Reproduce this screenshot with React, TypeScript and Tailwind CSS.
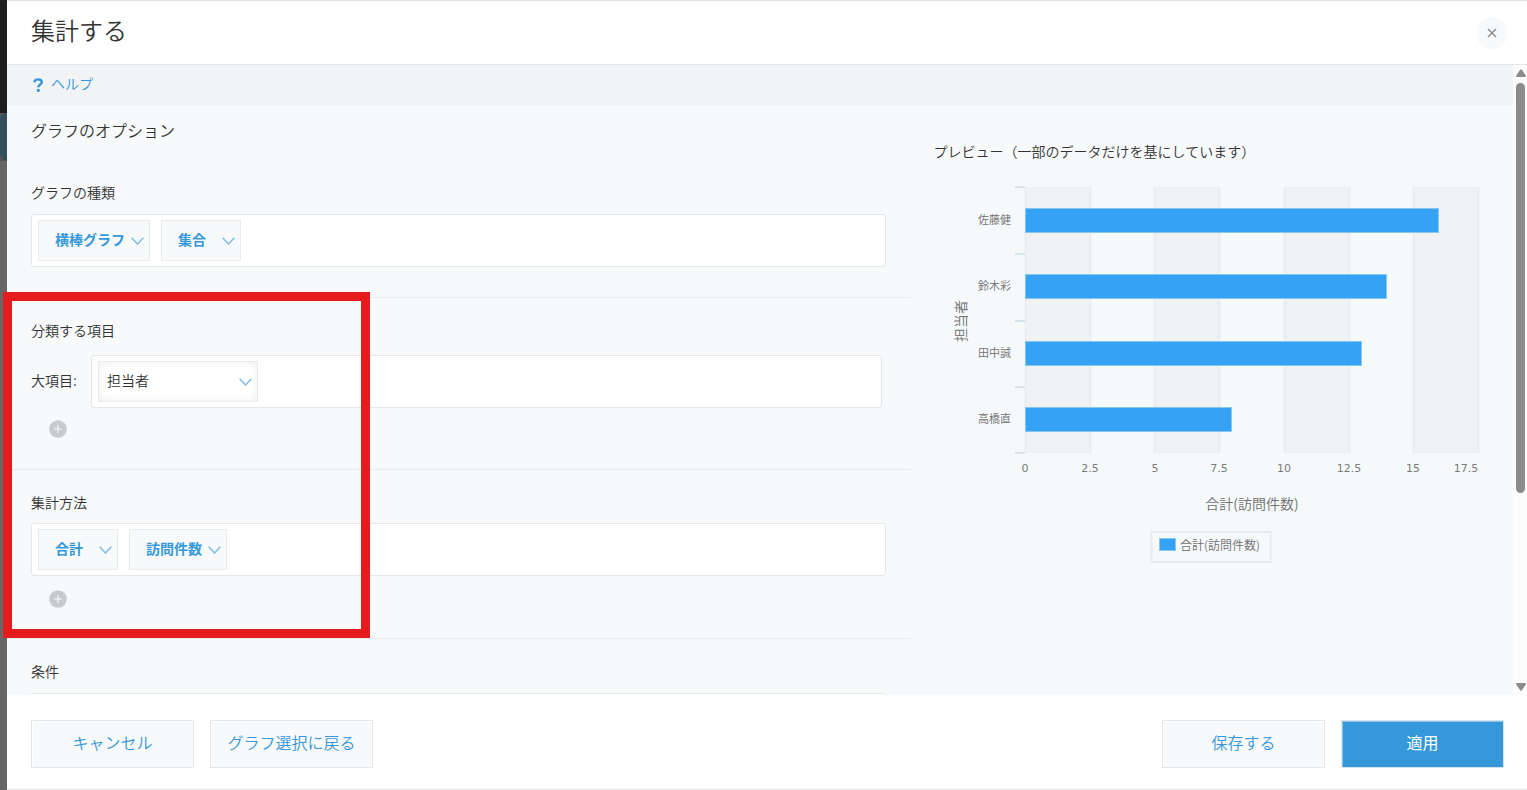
import type { ReactNode } from "react";

const STEP = 65;
const PLOT_LEFT = 91;
const PLOT_TOP = 10;
const PLOT_BOTTOM = 276;
const PLOT_WIDTH = 453;
const AXIS_MAX = 17.5;

const bars = [
  { name: "佐藤健", value: 16 },
  { name: "鈴木彩", value: 14 },
  { name: "田中誠", value: 13 },
  { name: "高橋直", value: 8 },
];

const axisTicks = [
  { label: "0", x: 91 },
  { label: "2.5", x: 156 },
  { label: "5", x: 221 },
  { label: "7.5", x: 285 },
  { label: "10", x: 350 },
  { label: "12.5", x: 415 },
  { label: "15", x: 479 },
  { label: "17.5", x: 532 },
];

function Chevron() {
  return (
    <svg
      className="pointer-events-none absolute top-1/2 right-[6px] h-2 w-[13px] -translate-y-1/2"
      viewBox="0 0 13 8"
      fill="none"
      stroke="#7fbdeb"
      strokeWidth="1.5"
      aria-hidden="true"
    >
      <path d="M0.6 0.8 L6.5 7 L12.4 0.8" />
    </svg>
  );
}

function Chip({ label, options, width }: { label: string; options: string[]; width: string }) {
  return (
    <div className={`relative h-[41px] ${width}`}>
      <select
        aria-label={label}
        className="h-full w-full appearance-none border border-[#e8ebec] bg-[#f7f9fa] pb-[3px] pl-4 text-sm font-bold text-[#3498db] outline-none"
      >
        {options.map((o) => (
          <option key={o}>{o}</option>
        ))}
      </select>
      <Chevron />
    </div>
  );
}

function Box({ children, className = "" }: { children?: ReactNode; className?: string }) {
  return (
    <div
      className={`flex h-[53px] items-center gap-[11px] rounded-[3px] border border-[#e3e7e8] bg-white px-[6px] ${className}`}
    >
      {children}
    </div>
  );
}

function AddButton({ label }: { label: string }) {
  return (
    <button type="button" aria-label={label} className="ml-[18px] block size-[18px]">
      <svg viewBox="0 0 18 18" className="size-full" aria-hidden="true">
        <circle cx="9" cy="9" r="8.8" fill="#c9cacb" />
        <path d="M9 5v8M5 9h8" stroke="#f7f9fa" strokeWidth="1.2" />
      </svg>
    </button>
  );
}

function Chart() {
  return (
    <svg
      width="552"
      height="399"
      viewBox="0 0 552 399"
      className="shrink-0 bg-[#f5f9fa]"
      role="img"
      aria-label="担当者ごとの合計(訪問件数)"
    >
      {[0, 2, 4, 6].map((i) => {
        const x = Math.round(PLOT_LEFT + (i * PLOT_WIDTH) / 7);
        return (
          <g key={i}>
            <rect x={x} y={PLOT_TOP - 1} width={STEP} height={PLOT_BOTTOM - PLOT_TOP} fill="#f0f1f3" />
            <path
              d={`M${x + 0.5} ${PLOT_TOP - 1}V${PLOT_BOTTOM - 1}M${x + STEP + 0.5} ${PLOT_TOP - 1}V${PLOT_BOTTOM - 1}`}
              stroke="#e8ecee"
              strokeWidth="1.5"
            />
          </g>
        );
      })}
      {[9, 76, 143, 209, 275].map((y) => (
        <path key={y} d={`M81 ${y}H91`} stroke="#dae4ec" strokeWidth="2" />
      ))}
      {bars.map((bar, i) => {
        const y = Math.round(30 + i * 66.4);
        return (
          <g key={bar.name}>
            <rect
              x={PLOT_LEFT + 0.5}
              y={y + 0.5}
              width={Math.round((bar.value / AXIS_MAX) * PLOT_WIDTH) - 1}
              height="24"
              fill="#36a2f5"
              stroke="#86c7f5"
            />
            <text x="77" y={y + 16} textAnchor="end" fontSize="11" fill="#707070">
              {bar.name}
            </text>
          </g>
        );
      })}
      <g
        fontSize="11"
        fontWeight="400"
        fill="#7b7b7b"
        fontFamily="'DejaVu Sans', sans-serif"
        textAnchor="middle"
      >
        {axisTicks.map((t) => (
          <text key={t.label} x={t.x} y="294">
            {t.label}
          </text>
        ))}
      </g>
      <text transform="translate(32 143) rotate(-90)" textAnchor="middle" fontSize="14" fill="#707070">
        担当者
      </text>
      <text x="318" y="331" textAnchor="middle" fontSize="14" fill="#707070">
        合計(訪問件数)
      </text>
      <rect x="217.5" y="354" width="119" height="30" fill="none" stroke="#e8ecee" strokeWidth="2" />
      <rect x="225.5" y="360.5" width="16" height="12" fill="#36a2f5" stroke="#86c7f5" />
      <text x="246" y="372" fontSize="12" fill="#707070">
        合計(訪問件数)
      </text>
    </svg>
  );
}

function Scrollbar() {
  return (
    <div className="flex w-[14px] shrink-0 flex-col items-center bg-[#fcfcfc] py-1 pl-px" aria-hidden="true">
      <svg width="10" height="8" viewBox="0 0 10 8" fill="#8b8b8b">
        <path d="M4.2 0.8Q5 -0.2 5.8 0.8L9.8 6.6Q10.2 8 9 8H1Q-0.2 8 0.2 6.6Z" />
      </svg>
      <div className="mt-[6px] w-[9px] flex-[410] rounded-full bg-[#8b8b8b]" />
      <div className="flex-[190]" />
      <svg width="10" height="8" viewBox="0 0 10 8" fill="#8b8b8b">
        <path d="M4.2 7.2Q5 8.2 5.8 7.2L9.8 1.4Q10.2 0 9 0H1Q-0.2 0 0.2 1.4Z" />
      </svg>
    </div>
  );
}

const plainButton =
  "h-12 w-[163px] border border-[#e3e7e8] bg-[#f7f9fa] pb-1 text-base text-[#3498db] shadow-[inset_1px_1px_0_#fff]";

export default function App() {
  return (
    <div
      className="relative flex h-screen overflow-hidden bg-white text-sm leading-5 font-[350] text-[#333] [font-family:'Noto_Sans_CJK_JP',sans-serif]"
      lang="ja"
    >
      <div className="flex w-[7px] shrink-0 flex-col overflow-hidden bg-[#666]" aria-hidden="true">
        <div className="h-[113px] bg-[#1e1e1e]" />
        <div className="h-12 bg-[#555]">
          <div className="h-full w-6 rounded-l-lg bg-[#344e5e]" />
        </div>
      </div>

      <div className="flex min-w-0 flex-1 flex-col border-t border-[#e3e5e6]">
        <header className="flex h-16 shrink-0 items-center justify-between border-b border-[#e3e7e8] pr-[19px] pl-6">
          <h1 className="pb-[6px] text-2xl font-[350]">集計する</h1>
          <button
            type="button"
            aria-label="閉じる"
            className="flex size-8 items-center justify-center rounded-full bg-[#f7f9fa]"
          >
            <svg width="10" height="10" viewBox="0 0 10 10" stroke="#8f8f8f" strokeWidth="1.5" aria-hidden="true">
              <path d="M1 1l8 8M9 1l-8 8" />
            </svg>
          </button>
        </header>

        <div className="flex min-h-0 flex-1">
          <main className="min-w-0 flex-1 overflow-hidden bg-[#f7f9fb]">
            <div className="flex h-10 items-center bg-[#f1f3f5] pl-6">
              <a href="#help" className="flex items-center gap-[6px] pb-1 text-[#3498db]">
                <svg width="14" height="14" viewBox="0 0 14 14" fill="none" className="mt-1" aria-hidden="true">
                  <path
                    d="M3.4 4.4C3.6 2.4 5 1.4 7.1 1.4S10.8 2.5 10.8 4.3C10.8 6.6 7.3 6.5 7.3 9.3"
                    stroke="#3498db"
                    strokeWidth="2.4"
                  />
                  <rect x="5.9" y="11" width="2.8" height="2.8" fill="#3498db" />
                </svg>
                ヘルプ
              </a>
            </div>

            <div className="flex">
              <div className="w-3/5 shrink-0">
                <section className="border-b border-[#e9ecee] pt-[15px] pr-[25px] pb-[30px] pl-6">
                  <h2 className="text-base leading-5 font-[350]">グラフのオプション</h2>
                  <h3 className="mt-[42px] mb-3">グラフの種類</h3>
                  <Box>
                    <Chip label="グラフの種類" options={["横棒グラフ", "縦棒グラフ", "円グラフ"]} width="w-28" />
                    <Chip label="表示形式" options={["集合", "積み上げ"]} width="w-20" />
                  </Box>
                </section>

                <section className="border-b border-[#e9ecee] pt-[22px] pr-[25px] pb-[31px] pl-6">
                  <h3 className="mb-[15px]">分類する項目</h3>
                  <div className="mb-3 flex items-center">
                    <label htmlFor="main-group" className="w-[60px] shrink-0 pb-1">
                      大項目:
                    </label>
                    <Box className="mr-1 flex-1">
                      <div className="relative h-[41px] w-40">
                        <select
                          id="main-group"
                          className="h-full w-full appearance-none border border-[#e8ebec] bg-white pb-[3px] pl-2 text-sm text-[#333] shadow-[inset_0_0_8px_#ebedef] outline-none"
                        >
                          <option>担当者</option>
                        </select>
                        <Chevron />
                      </div>
                    </Box>
                  </div>
                  <AddButton label="項目を追加" />
                </section>

                <section className="border-b border-[#e9ecee] pt-[22px] pr-[25px] pb-[30px] pl-6">
                  <h3 className="mb-[11px]">集計方法</h3>
                  <Box className="mb-[14px]">
                    <Chip label="集計方法" options={["合計", "平均"]} width="w-20" />
                    <Chip label="集計する項目" options={["訪問件数"]} width="w-[98px]" />
                  </Box>
                  <AddButton label="集計方法を追加" />
                </section>

                <section className="pt-[22px] pr-[25px] pl-6">
                  <h3 className="mb-3">条件</h3>
                  <Box />
                </section>
              </div>

              <aside className="flex min-w-0 flex-1 flex-col items-start pt-9 pl-[23px]">
                <h2 className="mb-[17px] font-[350]">プレビュー（一部のデータだけを基にしています）</h2>
                <Chart />
              </aside>
            </div>
          </main>
          <Scrollbar />
        </div>

        <footer className="flex shrink-0 justify-between border-b border-[#e3e5e6] pt-[25px] pr-[23px] pb-[21px] pl-6">
          <div className="flex gap-4">
            <button type="button" className={plainButton}>
              キャンセル
            </button>
            <button type="button" className={plainButton}>
              グラフ選択に戻る
            </button>
          </div>
          <div className="flex gap-4">
            <button type="button" className={plainButton}>
              保存する
            </button>
            <button
              type="button"
              className="h-12 w-[163px] border border-[#d5e3ea] bg-[#3498db] pb-1 text-base font-normal text-white shadow-[inset_1px_1px_0_#8cc6ec]"
            >
              適用
            </button>
          </div>
        </footer>
      </div>

      <div
        className="pointer-events-none absolute top-[292px] left-[3px] h-[346px] w-[367px] border-[9px] border-[#e61c1c]"
        aria-hidden="true"
      />
    </div>
  );
}
